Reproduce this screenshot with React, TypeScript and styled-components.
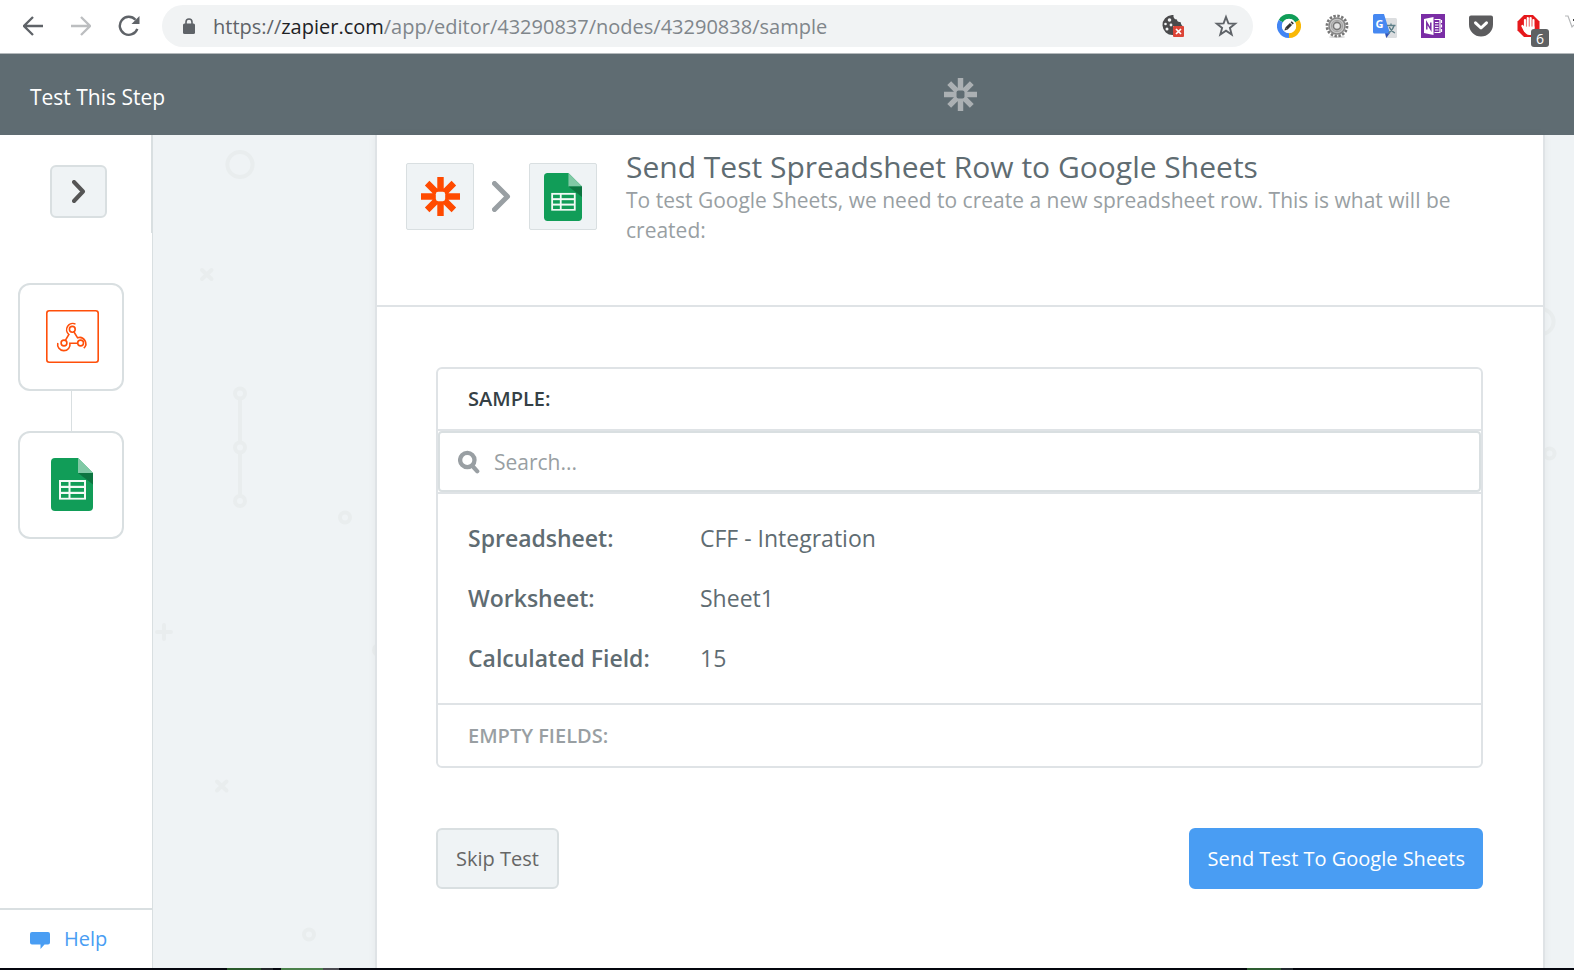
import React from "react";
import styled, { createGlobalStyle } from "styled-components";

const ink = "#5f6c72";
const muted = "#999fa3";
const line = "#dfe3e6";
const edge = "#d9dfe1";
const haze = "#eff3f5";
const mark = "#e9edee";
const blue = "#499df3";

const GlobalStyle = createGlobalStyle`
  *, *::before, *::after { box-sizing: border-box; }
  body {
    margin: 0;
    background: #fff;
    color: ${ink};
    font-family: "Open Sans", "Noto Sans", sans-serif;
  }
  button, input { font-family: inherit; }
  svg { flex-shrink: 0; }
`;

const Page = styled.div`
  display: flex;
  flex-direction: column;
  min-height: 100vh;
  overflow-x: hidden;
`;

/* Browser toolbar */

const BrowserBar = styled.div`
  display: flex;
  align-items: center;
  height: 54px;
  padding: 0 0 1px 9px;
  border-bottom: 1px solid #b4b9bc;
  overflow: hidden;
`;

const NavButton = styled.button`
  display: flex;
  align-items: center;
  justify-content: center;
  flex: none;
  width: 48px;
  height: 42px;
  padding: 0;
  border: 0;
  background: none;
`;

const Omnibox = styled.div`
  display: flex;
  align-items: center;
  flex: 1;
  min-width: 0;
  height: 42px;
  margin: 0 24px 0 9px;
  padding: 0 15px 0 21px;
  border-radius: 21px;
  background: #f1f3f4;
`;

const Address = styled.div`
  flex: 1;
  min-width: 0;
  margin-left: 18px;
  padding-top: 2px;
  overflow: hidden;
  white-space: nowrap;
  font-size: 20px;
  line-height: 30px;
  color: #80868b;
  outline: none;
`;

const Scheme = styled.span`
  color: #5f6368;
`;

const Host = styled.span`
  color: #202124;
`;

const IconButton = styled.button`
  position: relative;
  display: flex;
  align-items: center;
  justify-content: center;
  flex: none;
  width: 24px;
  height: 24px;
  padding: 0;
  border: 0;
  background: none;
`;

const OmniActions = styled.div`
  display: flex;
  gap: 29px;
`;

const Extensions = styled.div`
  display: flex;
  gap: 24px;
`;

const ClippedButton = styled(IconButton)`
  width: 9px;
  justify-content: flex-start;
  overflow: hidden;
`;

const Badge = styled.span`
  position: absolute;
  left: 14px;
  top: 15px;
  width: 18px;
  height: 18px;
  border-radius: 3px;
  background: #5f6163;
  color: #fff;
  font-size: 14px;
  line-height: 19px;
  text-align: center;
`;

/* Application header */

const AppHeader = styled.header`
  display: grid;
  grid-template-columns: 375px 1fr 29px;
  align-items: center;
  justify-items: center;
  height: 81px;
  background: ${ink};
`;

const StepTitle = styled.h1`
  justify-self: start;
  margin: 0;
  padding: 4px 0 0 30px;
  font-size: 21px;
  line-height: 30px;
  font-weight: 400;
  color: #fff;
`;

/* Workspace */

const Workspace = styled.div`
  display: flex;
  flex: 1;
`;

const Sidebar = styled.aside`
  display: flex;
  flex-direction: column;
  flex: none;
  width: 153px;
  border-right: 1px solid ${edge};
  background: #fff;
`;

const ToggleArea = styled.div`
  height: 98px;
  padding: 30px 0 0 50px;
  border-right: 1px solid ${edge};
`;

const ToggleButton = styled.button`
  display: flex;
  align-items: center;
  justify-content: center;
  width: 57px;
  height: 53px;
  padding: 0;
  border: 2px solid ${edge};
  border-radius: 6px;
  background: ${haze};
`;

const Steps = styled.nav`
  display: flex;
  flex-direction: column;
  align-items: center;
  width: 106px;
  margin: 50px 0 50px 18px;
`;

const StepCard = styled.button`
  display: flex;
  align-items: center;
  justify-content: center;
  width: 106px;
  height: 108px;
  padding: 0 0 1px 2px;
  border: 2px solid ${edge};
  border-radius: 12px;
  background: #fff;
`;

const Connector = styled.span`
  width: 1px;
  height: 40px;
  background: ${edge};
`;

const HelpLink = styled.a`
  display: flex;
  align-items: center;
  gap: 14px;
  height: 60px;
  margin-top: auto;
  padding: 0 0 2px 30px;
  border-top: 2px solid ${edge};
  color: ${blue};
  font-size: 20px;
  font-weight: 500;
  text-decoration: none;
`;

const Canvas = styled.main`
  display: grid;
  grid-template-columns: 222px minmax(0, 1fr) 29px;
  flex: 1;
  background: ${haze};
`;

const Gutter = styled.div`
  overflow: hidden;

  svg { display: block; }
`;

const Panel = styled.section`
  z-index: 1;
  border: solid ${line};
  border-width: 0 2px;
  background: #fff;
  box-shadow: 0 0 8px rgba(0, 0, 0, 0.05);
`;

const PanelHeader = styled.div`
  display: flex;
  align-items: flex-start;
  min-height: 172px;
  padding: 14px 60px 14px 29px;
  border-bottom: 2px solid ${line};
`;

const AppFlow = styled.div`
  display: flex;
  align-items: center;
  gap: 18px;
  flex: none;
  margin: 14px 29px 0 0;
`;

const AppTile = styled.span`
  display: flex;
  align-items: center;
  justify-content: center;
  width: 68px;
  height: 67px;
  border: 1px solid ${edge};
  border-radius: 2px;
  background: ${haze};
`;

const PanelTitle = styled.h2`
  margin: 0;
  font-size: 30px;
  line-height: 36px;
  font-weight: 400;
  color: ${ink};
`;

const PanelText = styled.p`
  margin: 0;
  font-size: 21px;
  line-height: 30px;
  color: ${muted};
`;

const PanelBody = styled.div`
  padding: 60px 60px 60px 59px;
`;

const SampleCard = styled.div`
  border: 2px solid ${line};
  border-radius: 6px;
`;

const CardLabel = styled.h3<{ $quiet?: boolean }>`
  margin: 0;
  padding: 0 30px;
  font-size: 20px;
  line-height: ${(p) => (p.$quiet ? 61 : 60)}px;
  font-weight: 600;
  color: ${(p) => (p.$quiet ? muted : "#354045")};
`;

const SearchRow = styled.div`
  display: flex;
  border: solid ${line};
  border-width: 2px 0;
`;

const SearchBox = styled.label`
  display: flex;
  align-items: center;
  gap: 14px;
  flex: 1;
  height: 61px;
  padding: 0 18px;
  border: 2px solid ${edge};
  border-radius: 4px;
`;

const SearchInput = styled.input`
  flex: 1;
  min-width: 0;
  padding: 0;
  border: 0;
  outline: none;
  background: none;
  font-size: 21px;
  line-height: 30px;
  color: ${ink};

  &::placeholder { color: ${muted}; opacity: 1; }
`;

const FieldList = styled.dl`
  margin: 0;
  padding: 14px 30px 15px;
  border-bottom: 2px solid ${line};
`;

const Field = styled.div`
  display: grid;
  grid-template-columns: 232px 1fr;
  font-size: 23px;
  line-height: 60px;
`;

const FieldName = styled.dt`
  font-weight: 600;
`;

const FieldValue = styled.dd`
  margin: 0;
`;

const Actions = styled.div`
  display: flex;
  justify-content: space-between;
  margin-top: 60px;
`;

const ActionButton = styled.button<{ $primary?: boolean }>`
  height: 61px;
  padding: 0 ${(p) => (p.$primary ? 16 : 18)}px;
  border: 2px solid ${(p) => (p.$primary ? blue : edge)};
  border-radius: 6px;
  background: ${(p) => (p.$primary ? blue : haze)};
  color: ${(p) => (p.$primary ? "#fff" : "#666")};
  font-size: 20px;
`;

const Taskbar = styled.div`
  height: 2px;
  background: linear-gradient(
    90deg,
    #05070f 227px, #2a5a2c 227px 261px, #22262a 261px 273px,
    #05070f 273px 281px, #4b814b 281px 323px, #4c4c52 323px 339px,
    #05070f 339px 1247px, #2f6034 1247px 1281px, #232a30 1281px 1293px,
    #05070f 1293px
  );
`;

/* Drawings */

const Asterisk = ({ size, color, hole }: { size: number; color: string; hole: string }) => (
  <svg width={size} height={size} viewBox="-20 -20 40 40" aria-hidden="true">
    <g stroke={color} strokeWidth="6.6">
      <path d="M-20 0H20M0-20V20M-13.7-13.7L13.7 13.7M-13.7 13.7L13.7-13.7" />
    </g>
    <rect x="-7.5" y="-7.5" width="15" height="15" rx="2" fill={color} />
    <rect x="-4.8" y="-4.8" width="9.6" height="9.6" rx="2.4" fill={hole} />
  </svg>
);

const SheetsIcon = ({ width, height }: { width: number; height: number }) => (
  <svg width={width} height={height} viewBox="0 0 42 53" aria-hidden="true">
    <path d="M4 0H27L42 15V49a4 4 0 0 1-4 4H4a4 4 0 0 1-4-4V4a4 4 0 0 1 4-4z" fill="#119d58" />
    <path d="M27 0L42 15H27z" fill="#80c9a5" />
    <path d="M27 15H42V26.500z" fill="#0c7540" />
    <rect x="8" y="22" width="27" height="19.600" fill="#f3faf6" />
    <g fill="#119d58">
      {[24, 30, 36].map((y) => (
        <React.Fragment key={y}>
          <rect x="10" y={y} width="7.500" height="3.800" />
          <rect x="19.500" y={y} width="13.500" height="3.800" />
        </React.Fragment>
      ))}
    </g>
  </svg>
);

const WebhookIcon = () => (
  <svg width="53" height="53" viewBox="0 0 53 53" fill="none" stroke="#ff4f0a" aria-hidden="true">
    <rect x="0.800" y="0.800" width="51.400" height="51.400" rx="2.500" strokeWidth="1.600" />
    <g strokeWidth="1.600">
      <circle cx="26.300" cy="19.300" r="2.900" />
      <circle cx="18" cy="33" r="2.900" />
      <circle cx="34.600" cy="33" r="2.900" />
      <path d="M29.500 14.100A6.200 6.200 0 0 0 22.900 24.500L19.500 30.200" />
      <path d="M11.800 33A6.200 6.200 0 1 0 23.900 33.200H31.500" />
      <path d="M28 22L31.600 27.800A6.200 6.200 0 0 1 37.800 38.200" />
    </g>
  </svg>
);

const Chevron = ({ width, height, color, weight }: { width: number; height: number; color: string; weight: number }) => (
  <svg width={width} height={height} viewBox={`0 0 ${width} ${height}`} aria-hidden="true">
    <path
      d={`M${weight / 2} ${weight / 2}L${width - weight / 2 - 1} ${height / 2}L${weight / 2} ${height - weight / 2}`}
      fill="none"
      stroke={color}
      strokeWidth={weight}
      strokeLinecap="round"
      strokeLinejoin="round"
    />
  </svg>
);

const BackArrow = ({ color, flip }: { color: string; flip?: boolean }) => (
  <svg width="20" height="20" viewBox="0 0 20 20" fill="none" stroke={color} strokeWidth="2.300" aria-hidden="true">
    <path d={flip ? "M0 10H18M10 1L19 10L10 19" : "M20 10H2M10 1L1 10L10 19"} />
  </svg>
);

const ReloadIcon = () => (
  <svg width="22" height="22" viewBox="0 0 22 22" aria-hidden="true">
    <path d="M17.500 4.800A9 9 0 1 0 19.300 13.800" fill="none" stroke="#5f6368" strokeWidth="2.400" />
    <path d="M21.500 1V9H13.500z" fill="#5f6368" />
  </svg>
);

const LockIcon = () => (
  <svg width="12" height="16" viewBox="0 0 12 16" aria-hidden="true">
    <rect y="5.500" width="12" height="10.500" rx="1.500" fill="#5f6368" />
    <path d="M3 6V4a3 3 0 0 1 6 0V6" fill="none" stroke="#5f6368" strokeWidth="1.600" />
  </svg>
);

const CookieIcon = () => (
  <svg width="24" height="24" viewBox="0 0 24 24" aria-hidden="true">
    <path d="M11 1A10 10 0 1 0 12 21V12H21.500C20 11 20 9 19.500 8C17 8.500 16 7 16 5.500C13.500 5.500 12 3.500 12.500 1z" fill="#4a4a4c" />
    <g fill="#f1f3f4">
      <circle cx="8.500" cy="6" r="1.800" />
      <circle cx="4.500" cy="10" r="1.300" />
      <circle cx="10" cy="11" r="1.400" />
      <circle cx="6" cy="15" r="1.500" />
    </g>
    <rect x="12" y="12" width="11" height="11" rx="1" fill="#dc4437" />
    <path d="M15 15L20 20M20 15L15 20" stroke="#fff" strokeWidth="1.700" />
  </svg>
);

const StarIcon = () => (
  <svg width="24" height="24" viewBox="0 0 24 24" aria-hidden="true">
    <path
      d="M12 3L14.400 9.400L21.200 9.700L15.900 13.900L17.700 20.500L12 16.700L6.300 20.500L8.100 13.900L2.800 9.700L9.600 9.400z"
      fill="none"
      stroke="#5f6368"
      strokeWidth="1.900"
    />
  </svg>
);

const PenRingIcon = () => (
  <svg width="24" height="24" viewBox="0 0 24 24" aria-hidden="true">
    <g fill="none" strokeWidth="5">
      <path d="M3.800 7.250A9.500 9.500 0 0 1 20.200 7.250" stroke="#109d58" />
      <path d="M20.200 7.250A9.500 9.500 0 0 1 12 21.500" stroke="#f9b806" />
      <path d="M12 21.500A9.500 9.500 0 0 1 3.800 7.250" stroke="#4285f4" />
    </g>
    <circle cx="12" cy="12" r="7.200" fill="#fff" />
    <path d="M9.400 14.600L14 10" stroke="#333" strokeWidth="3" />
    <path d="M14.600 9.400L15.800 8.200" stroke="#333" strokeWidth="3" />
    <path d="M7.400 16.600L8.200 13.700L10.300 15.800z" fill="#333" />
  </svg>
);

const GearIcon = () => (
  <svg width="24" height="24" viewBox="-12 -12 24 24" fill="none" aria-hidden="true">
    <ellipse cx="0" cy="11" rx="8" ry="1" fill="#d5d5d5" />
    <circle r="10" stroke="#777" strokeWidth="2.800" strokeDasharray="2.400 1.527" />
    <circle r="8" fill="#c6c6c6" stroke="#858585" strokeWidth="1.500" />
    <circle r="5.600" stroke="#a2a2a2" strokeWidth="1" />
    <circle r="3.600" fill="#e4e4e4" stroke="#777" strokeWidth="1.600" />
  </svg>
);

const TranslateIcon = () => (
  <svg width="24" height="24" viewBox="0 0 24 24" aria-hidden="true">
    <path d="M9 4H22.500A1.500 1.500 0 0 1 24 5.500V22.500A1.500 1.500 0 0 1 22.500 24H13z" fill="#dcdee0" />
    <path d="M12 19H17L13.300 24z" fill="#3454b4" />
    <path d="M1.500 0H11L17 19.500H1.500A1.500 1.500 0 0 1 0 18V1.500A1.500 1.500 0 0 1 1.500 0z" fill="#4688f1" />
    <text x="2.600" y="14" fill="#fff" fontFamily="Open Sans, sans-serif" fontSize="11" fontWeight="700">G</text>
    <path d="M14 11.500H22.500M18 9.500V11.500M21 11.800C20 15 18 17.500 15.500 19M16.300 13C17.500 15.800 19.500 18 22 19" fill="none" stroke="#5d7f88" strokeWidth="1.300" />
  </svg>
);

const NotebookIcon = () => (
  <svg width="24" height="24" viewBox="0 0 24 24" aria-hidden="true">
    <rect width="24" height="24" fill="#7a2da5" />
    <path d="M3 5L12.500 3V21L3 19z" fill="#fff" />
    <path d="M13.500 5.500H19V18.500H13.500" fill="none" stroke="#fff" strokeWidth="1.200" />
    <path d="M14 8.500H17.500M14 11H17.500M14 13.500H17.500M14 16H17.500M20.500 6V9M20.500 10.500V13.500M20.500 15V18" stroke="#fff" strokeWidth="1.200" />
    <path d="M5.800 15.500V8.700L9.800 15.300V8.500" fill="none" stroke="#7a2da5" strokeWidth="1.500" />
  </svg>
);

const PocketIcon = () => (
  <svg width="24" height="24" viewBox="0 0 24 24" aria-hidden="true">
    <path d="M2 1.500H22A2 2 0 0 1 24 3.500V10.500A12 12 0 0 1 0 10.500V3.500A2 2 0 0 1 2 1.500z" fill="#5c5c5e" />
    <path d="M6.500 8.800L12 14L17.500 8.800" fill="none" stroke="#fff" strokeWidth="3" strokeLinecap="round" strokeLinejoin="round" />
  </svg>
);

const StopHandIcon = () => (
  <svg width="24" height="24" viewBox="0 0 24 24" aria-hidden="true">
    <path d="M7 1H16L22.500 7.500V16.500L16 23H7L0.500 16.500V7.500z" fill="#e6191c" />
    <g stroke="#fff" strokeWidth="2.200" strokeLinecap="round">
      <path d="M8 6V14M10.800 4V13M13.600 4V13M16.400 6V14M5.400 12L8 17" />
    </g>
    <path d="M7 12.500H17.500V16C17.500 19 15 21 12.500 21C9.500 21 7.500 18.500 6.500 15.500z" fill="#fff" />
    <path d="M9.400 6V12.500M12.200 5V12.500M15 6V12.500" stroke="#e88" strokeWidth="0.600" />
  </svg>
);

const SearchIcon = () => (
  <svg width="22" height="24" viewBox="0 0 22 24" fill="none" stroke={muted} aria-hidden="true">
    <circle cx="9.300" cy="10" r="7.200" strokeWidth="4.300" />
    <path d="M14.500 16L19.300 21.300" strokeWidth="4.200" strokeLinecap="round" />
  </svg>
);

const ChatIcon = () => (
  <svg width="20" height="21" viewBox="0 -4 20 21" aria-hidden="true">
    <path d="M2 0H18A2 2 0 0 1 20 2V10.500A2 2 0 0 1 18 12.500H14.500L10.500 17V12.500H2A2 2 0 0 1 0 10.500V2A2 2 0 0 1 2 0z" fill={blue} />
  </svg>
);

const LeftPattern = () => (
  <svg width="222" height="815" fill="none" stroke={mark} strokeWidth="4" strokeLinecap="round" aria-hidden="true">
    <circle cx="87" cy="29.500" r="12.600" />
    <path d="M49 135L58.500 144M58.500 135L49 144" />
    <circle cx="87" cy="258.500" r="5" />
    <circle cx="87" cy="312.500" r="5" />
    <circle cx="87" cy="366" r="5" />
    <path d="M87 265V306M87 319V359" />
    <circle cx="192" cy="382.500" r="5" />
    <path d="M4 497H18M11 490V504" />
    <circle cx="226" cy="515" r="5" />
    <path d="M64 646.500L73.500 655.500M73.500 646.500L64 655.500" />
    <circle cx="156" cy="799.500" r="5" />
  </svg>
);

const RightPattern = () => (
  <svg width="29" height="400" fill="none" stroke={mark} strokeWidth="4" aria-hidden="true">
    <circle cx="-4" cy="186.500" r="12.600" />
    <circle cx="4.500" cy="318.500" r="5" />
  </svg>
);

const fields = [
  { name: "Spreadsheet:", value: "CFF - Integration" },
  { name: "Worksheet:", value: "Sheet1" },
  { name: "Calculated Field:", value: "15" },
];

export default function App() {
  return (
    <Page>
      <GlobalStyle />
      <BrowserBar>
        <NavButton aria-label="Back"><BackArrow color="#5f6368" /></NavButton>
        <NavButton aria-label="Forward"><BackArrow color="#bcbec0" flip /></NavButton>
        <NavButton aria-label="Reload"><ReloadIcon /></NavButton>
        <Omnibox>
          <LockIcon />
          <Address role="textbox" aria-label="Address" tabIndex={0}>
            <Scheme>https://</Scheme><Host>zapier.com</Host>/app/editor/43290837/nodes/43290838/sample
          </Address>
          <OmniActions>
            <IconButton aria-label="Cookies blocked"><CookieIcon /></IconButton>
            <IconButton aria-label="Bookmark this page"><StarIcon /></IconButton>
          </OmniActions>
        </Omnibox>
        <Extensions>
          <IconButton aria-label="Editor extension"><PenRingIcon /></IconButton>
          <IconButton aria-label="Settings extension"><GearIcon /></IconButton>
          <IconButton aria-label="Translate"><TranslateIcon /></IconButton>
          <IconButton aria-label="OneNote Clipper"><NotebookIcon /></IconButton>
          <IconButton aria-label="Save to Pocket"><PocketIcon /></IconButton>
          <IconButton aria-label="Ad blocker">
            <StopHandIcon />
            <Badge>6</Badge>
          </IconButton>
          <ClippedButton aria-label="More extensions">
            <svg width="24" height="24" viewBox="0 0 24 24" fill="none" aria-hidden="true">
              <path d="M0 2H3L7 13L9 11" stroke="#b5b7b9" strokeWidth="1.200" />
              <path d="M8 6H11" stroke="#444" strokeWidth="2" />
            </svg>
          </ClippedButton>
        </Extensions>
      </BrowserBar>

      <AppHeader>
        <StepTitle>Test This Step</StepTitle>
        <Asterisk size={33} color="#abb0b3" hole={ink} />
      </AppHeader>

      <Workspace>
        <Sidebar>
          <ToggleArea>
            <ToggleButton aria-label="Expand steps">
              <Chevron width={14} height={23} color="#555" weight={4} />
            </ToggleButton>
          </ToggleArea>
          <Steps aria-label="Steps">
            <StepCard aria-label="Webhooks"><WebhookIcon /></StepCard>
            <Connector />
            <StepCard aria-label="Google Sheets"><SheetsIcon width={42} height={53} /></StepCard>
          </Steps>
          <HelpLink href="#help"><ChatIcon />Help</HelpLink>
        </Sidebar>

        <Canvas>
          <Gutter><LeftPattern /></Gutter>
          <Panel>
            <PanelHeader>
              <AppFlow>
                <AppTile><Asterisk size={39} color="#ff4a00" hole={haze} /></AppTile>
                <Chevron width={19} height={31} color={muted} weight={5} />
                <AppTile><SheetsIcon width={38} height={48} /></AppTile>
              </AppFlow>
              <div>
                <PanelTitle>Send Test Spreadsheet Row to Google Sheets</PanelTitle>
                <PanelText>
                  To test Google Sheets, we need to create a new spreadsheet row. This is what will be created:
                </PanelText>
              </div>
            </PanelHeader>
            <PanelBody>
              <SampleCard>
                <CardLabel>SAMPLE:</CardLabel>
                <SearchRow>
                  <SearchBox>
                    <SearchIcon />
                    <SearchInput type="text" placeholder="Search..." aria-label="Search sample fields" />
                  </SearchBox>
                </SearchRow>
                <FieldList>
                  {fields.map((f) => (
                    <Field key={f.name}>
                      <FieldName>{f.name}</FieldName>
                      <FieldValue>{f.value}</FieldValue>
                    </Field>
                  ))}
                </FieldList>
                <CardLabel $quiet>EMPTY FIELDS:</CardLabel>
              </SampleCard>
              <Actions>
                <ActionButton type="button">Skip Test</ActionButton>
                <ActionButton type="button" $primary>Send Test To Google Sheets</ActionButton>
              </Actions>
            </PanelBody>
          </Panel>
          <Gutter><RightPattern /></Gutter>
        </Canvas>
      </Workspace>
      <Taskbar />
    </Page>
  );
}
